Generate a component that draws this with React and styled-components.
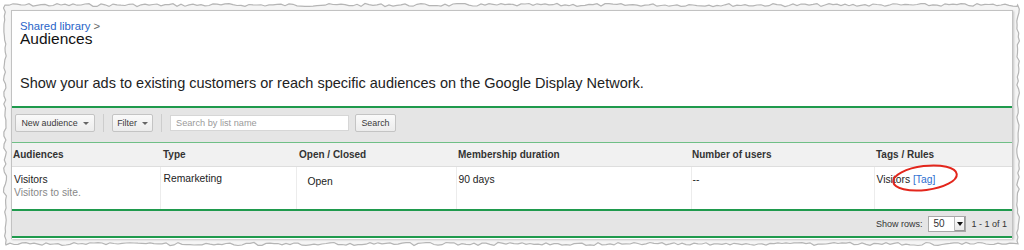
import React from 'react';
import styled, { createGlobalStyle } from 'styled-components';

const Global = createGlobalStyle`
  html, body { margin: 0; padding: 0; background: #fff; }
  body { font-family: "Liberation Sans", Arial, sans-serif; color: #222; }
  * { box-sizing: border-box; }
`;

const Stage = styled.div`
  position: relative;
  width: 1024px;
  height: 250px;
  padding: 10px 11px 0 11px;
  overflow: hidden;
`;

const Torn = styled.svg`
  position: absolute;
  left: 0;
  top: 0;
  z-index: 0;
`;

const Panel = styled.div`
  position: relative;
  z-index: 1;
  width: 1002px;
  height: 229px;
  background: #fff;
  border: 1px solid #c2c2c2;
  border-bottom: none;
  box-shadow: 1px 1px 2px rgba(0, 0, 0, 0.2);
`;

const Intro = styled.div`
  height: 95px;
  padding: 9px 8px 0 8px;
`;

const Crumb = styled.div`
  font-size: 11.3px;
  line-height: 12px;
  color: #666;
  a { color: #2864c8; text-decoration: none; }
`;

const Title = styled.h1`
  margin: -1px 0 0 0;
  font-size: 15.5px;
  line-height: 16px;
  font-weight: normal;
  color: #111;
`;

const Desc = styled.p`
  margin: 28px 0 0 0;
  font-size: 14.5px;
  line-height: 16px;
  color: #222;
`;

const Rule = styled.div`
  height: ${(p) => p.$h || 2}px;
  background: ${(p) => p.$c || '#1f9a4d'};
`;

const Toolbar = styled.div`
  height: 34px;
  background: #e5e5e5;
  display: flex;
  align-items: flex-start;
  padding: 6px 0 0 3px;
`;

const Btn = styled.button`
  width: ${(p) => p.$w}px;
  height: 18px;
  display: inline-flex;
  align-items: center;
  justify-content: center;
  padding: 0;
  border: 1px solid #c4c4c4;
  border-radius: 2px;
  background: linear-gradient(#fafafa, #ececec);
  font-family: "Liberation Sans", Arial, sans-serif;
  font-size: 8.9px;
  color: #3a3a3a;
  margin-left: ${(p) => p.$ml || 0}px;
`;

const Caret = styled.span`
  width: 0;
  height: 0;
  margin-left: 5px;
  margin-top: 1px;
  border-left: 3px solid transparent;
  border-right: 3px solid transparent;
  border-top: 3px solid #666;
`;

const Sep = styled.span`
  width: 1px;
  height: 18px;
  background: #cdcdcd;
  margin: 0 8px;
`;

const SearchInput = styled.input`
  width: 179px;
  height: 16px;
  margin-top: 1px;
  border: 1px solid #d6d6d6;
  background: #fff;
  padding: 0 5px;
  font-family: "Liberation Sans", Arial, sans-serif;
  font-size: 9.2px;
  color: #333;
  outline: none;
  &::placeholder { color: #9a9a9a; }
`;

const Table = styled.table`
  width: 1000px;
  border-collapse: collapse;
  table-layout: fixed;
`;

const Th = styled.th`
  height: 23px;
  background: #f1f1f1;
  border-bottom: 1px solid #dedede;
  text-align: left;
  padding: 1px 0 0 ${(p) => p.$pl ?? 2}px;
  font-size: 10px;
  font-weight: bold;
  color: #333;
`;

const Td = styled.td`
  height: 43px;
  vertical-align: top;
  padding: ${(p) => p.$pt || 6}px 0 0 ${(p) => p.$pl ?? 2}px;
  border-left: ${(p) => (p.$first ? 'none' : '1px solid #ececec')};
  font-size: 10.3px;
  line-height: 13px;
  color: #222;
`;

const Sub = styled.div`
  color: #888;
`;

const Link = styled.span`
  color: #2f6fd0;
`;

const Footer = styled.div`
  height: 25px;
  background: #e5e5e5;
  display: flex;
  align-items: center;
  justify-content: flex-end;
  padding: 0 5px 0 0;
  font-size: 9px;
  color: #333;
`;

const Select = styled.span`
  display: inline-flex;
  width: 38px;
  height: 16px;
  margin: 0 5px 0 6px;
  border: 1px solid #a8a8a8;
  background: #fff;
  font-size: 10px;
  align-items: center;
  padding-left: 4px;
  justify-content: space-between;
`;

const SelArrow = styled.span`
  width: 11px;
  height: 14px;
  border-left: 1px solid #bbb;
  background: linear-gradient(#fff, #e6e6e6);
  display: flex;
  align-items: center;
  justify-content: center;
  box-shadow: inset -1px -1px 0 #999;
  &::after {
    content: '';
    border-left: 3px solid transparent;
    border-right: 3px solid transparent;
    border-top: 4px solid #111;
  }
`;

const Circle = styled.svg`
  position: absolute;
  left: 877px;
  top: 150px;
  pointer-events: none;
`;

function tornPath(x0, y0, x1, y1) {
  let s = 7;
  const rnd = () => {
    s = (s * 9301 + 49297) % 233280;
    return s / 233280 - 0.5;
  };
  const pts = [];
  for (let x = x0; x < x1; x += 4) pts.push([x, y0 + rnd() * 3]);
  for (let y = y0; y < y1; y += 4) pts.push([x1 + rnd() * 3, y]);
  for (let x = x1; x > x0; x -= 4) pts.push([x, y1 + rnd() * 3]);
  for (let y = y1; y > y0; y -= 4) pts.push([x0 + rnd() * 3, y]);
  return 'M' + pts.map((p) => p[0].toFixed(1) + ',' + p[1].toFixed(1)).join('L') + 'Z';
}

const tornD = tornPath(5, 5, 1018, 244);

export default function App() {
  return (
    <>
      <Global />
      <Stage>
        <Torn width="1024" height="250">
          <path d={tornD} fill="#f5f5f5" stroke="#b5b5b5" strokeWidth="1.2" />
        </Torn>
        <Panel>
          <Intro>
            <Crumb><a>Shared library</a> &gt;</Crumb>
            <Title>Audiences</Title>
            <Desc>Show your ads to existing customers or reach specific audiences on the Google Display Network.</Desc>
          </Intro>
          <Rule />
          <Toolbar>
            <Btn $w={80}>New audience<Caret /></Btn>
            <Sep />
            <Btn $w={41}>Filter<Caret /></Btn>
            <Sep />
            <SearchInput placeholder="Search by list name" />
            <Btn $w={41} $ml={6}>Search</Btn>
          </Toolbar>
          <Rule $h={1} $c="#6fbf86" />
          <Table>
            <colgroup>
              <col style={{ width: 148 }} />
              <col style={{ width: 136 }} />
              <col style={{ width: 160 }} />
              <col style={{ width: 235 }} />
              <col style={{ width: 183 }} />
              <col />
            </colgroup>
            <thead>
              <tr>
                <Th $pl={1}>Audiences</Th>
                <Th $pl={3}>Type</Th>
                <Th $pl={3}>Open / Closed</Th>
                <Th>Membership duration</Th>
                <Th $pl={1}>Number of users</Th>
                <Th>Tags / Rules</Th>
              </tr>
            </thead>
            <tbody>
              <tr>
                <Td $first $pl={2}>
                  Visitors
                  <Sub>Visitors to site.</Sub>
                </Td>
                <Td $pl={3} $pt={5}>Remarketing</Td>
                <Td $pl={11} $pt={8}>Open</Td>
                <Td>90 days</Td>
                <Td $pl={1}>--</Td>
                <Td>Visitors <Link>[Tag]</Link></Td>
              </tr>
            </tbody>
          </Table>
          <Rule />
          <Footer>
            Show rows:
            <Select>50<SelArrow /></Select>
            1 - 1 of 1
          </Footer>
          <Rule />
          <Circle width="72" height="34">
            <ellipse cx="36" cy="17" rx="32" ry="12" transform="rotate(-7 36 17)" fill="none" stroke="#e3261c" strokeWidth="2" />
          </Circle>
        </Panel>
      </Stage>
    </>
  );
}
